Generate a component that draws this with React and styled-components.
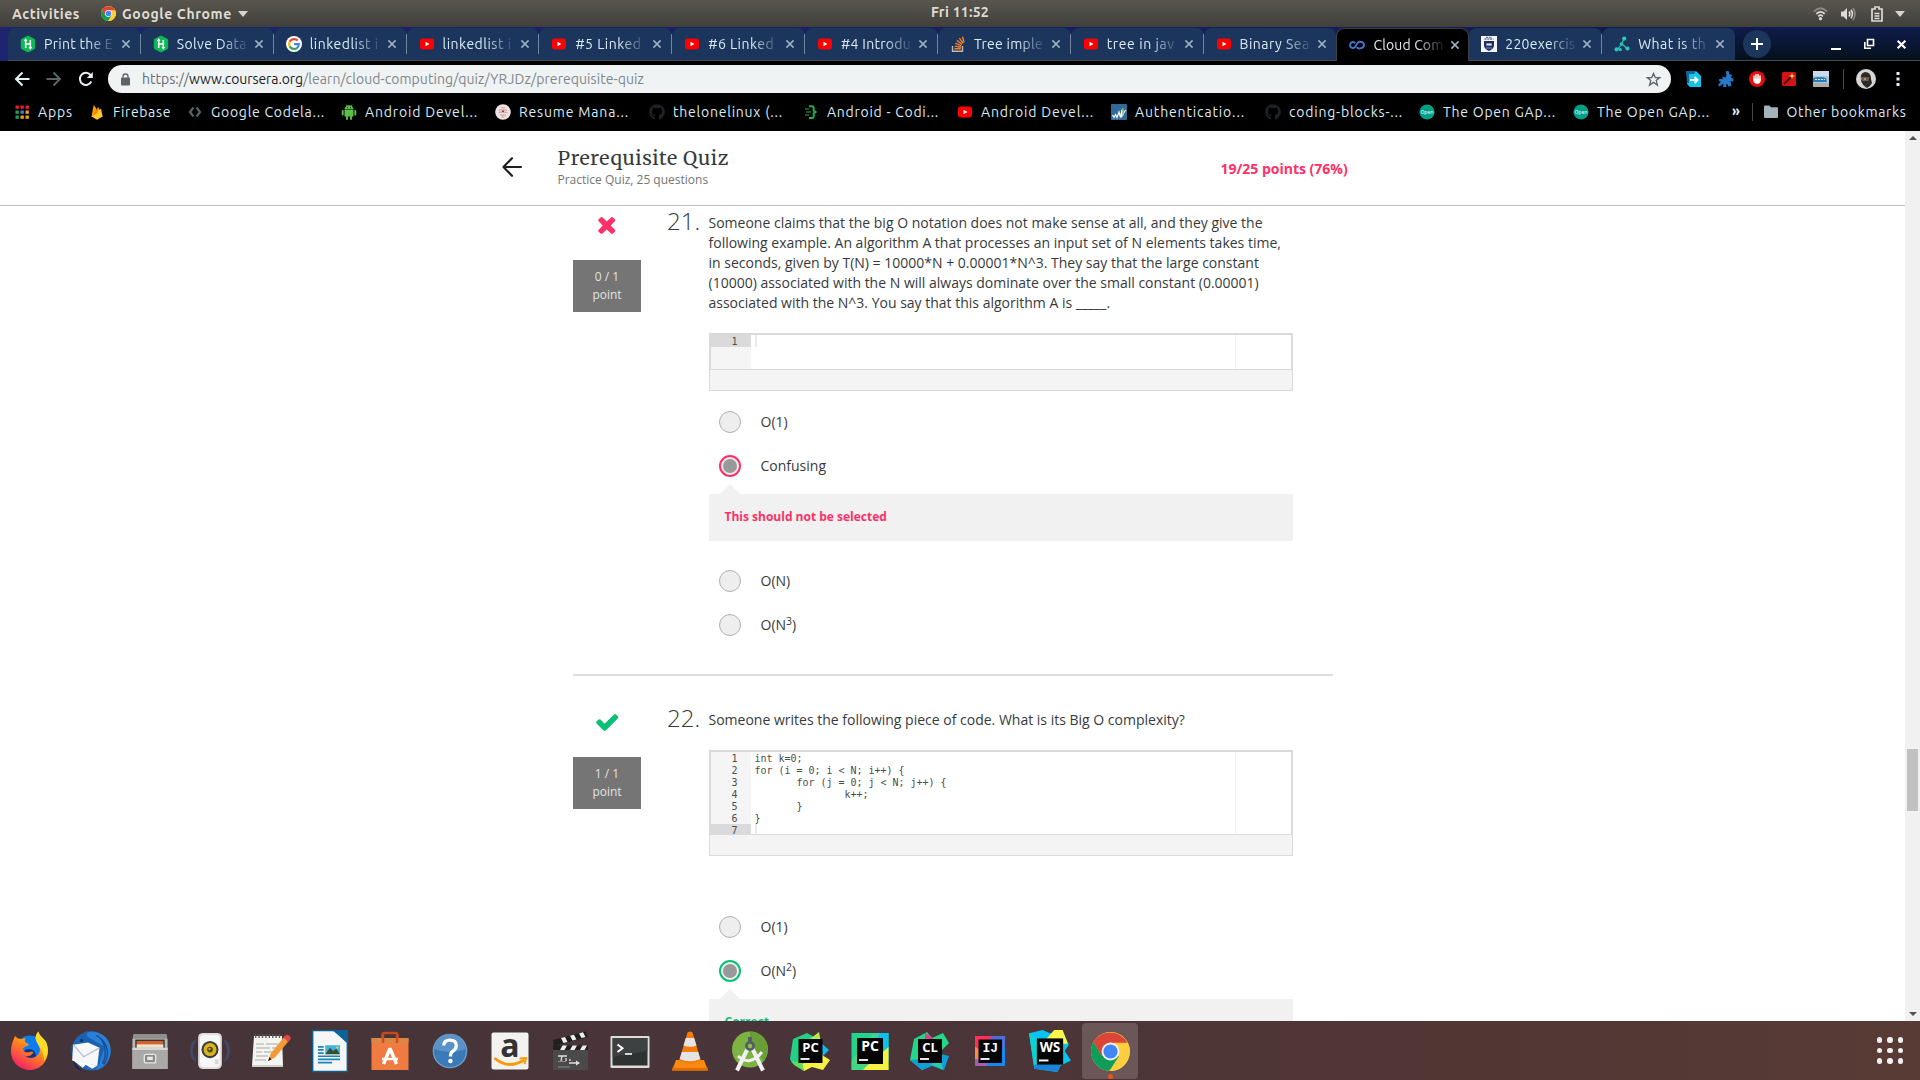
import React, { useLayoutEffect, useRef } from "react";
import styled, { createGlobalStyle } from "styled-components";
import { FaGithub } from "react-icons/fa";

const Global = createGlobalStyle`
  * { box-sizing: border-box; }
  html, body { margin: 0; padding: 0; }
  body { width: 1920px; height: 1080px; overflow: hidden; background: #fff; }
  svg { display: block; flex: none; overflow: visible; }
`;

const UI = `"Ubuntu", "Noto Sans", "Open Sans", sans-serif`;
const BODY = `"Open Sans", "Noto Sans", sans-serif`;

/* ---------- fitted text ---------- */
const Run = styled.span`
  display: inline-block;
  white-space: pre;
  color: ${(p) => p.$color || "inherit"};
`;
function Fitted({ w, color, children }) {
  const ref = useRef(null);
  useLayoutEffect(() => {
    const el = ref.current;
    el.style.letterSpacing = "0px";
    const natural = el.getBoundingClientRect().width;
    el.style.letterSpacing = (w - natural) / el.textContent.length + "px";
  }, [w, children]);
  return <Run ref={ref} $color={color}>{children}</Run>;
}

/* ---------- desktop ---------- */
const Desktop = styled.div`
  display: flex;
  flex-direction: column;
  width: 1920px;
  height: 1080px;
  overflow: hidden;
  font-family: ${UI};
`;
const TopBar = styled.div`
  display: grid;
  grid-template-columns: 1fr auto 1fr;
  align-items: center;
  flex: none;
  height: 27px;
  padding: 0 12px 0 12px;
  background: linear-gradient(#59564f, #403f3a);
  color: #dfdbd2;
  font-size: 14px;
  font-weight: 600;
  line-height: 26px;
`;
const TopLeft = styled.div`
  display: flex;
  align-items: center;
`;
const AppMenu = styled.div`
  display: flex;
  align-items: center;
  gap: 6px;
  margin-left: 21px;
`;
const Clock = styled.div`
  height: 26px;
  margin-top: -1px;
  line-height: 25px;
`;
const TopRight = styled.div`
  display: flex;
  align-items: center;
  justify-content: flex-end;
`;
const StatusSlot = styled.div`
  display: flex;
  justify-content: center;
  width: ${(p) => p.$w}px;
`;

/* ---------- tabs ---------- */
const TabStrip = styled.div`
  display: flex;
  flex: none;
  height: 34px;
  padding: 1px 0 0 8px;
  background: linear-gradient(90deg, rgba(30,36,112,1), rgba(27,30,96,.9) 60%, rgba(14,26,66,0) 88%), linear-gradient(#101c4c, #04101a);
`;
const TabBox = styled.div`
  display: flex;
  align-items: center;
  position: relative;
  width: 132.85px;
  height: 33px;
  padding-left: 12px;
  border-radius: 8px 8px 0 0;
  background: ${(p) => (p.$active ? "#000" : "#1b355d")};
  border: ${(p) => (p.$active ? "1px solid #3c4045" : "0")};
  border-bottom: ${(p) => (p.$active ? "0" : "1px solid #46484a")};
  color: #dcebf3;
  font-size: 14px;
`;
const TabSep = styled.i`
  width: 1px;
  height: 20px;
  margin-left: auto;
  background: ${(p) => (p.$hide ? "transparent" : "#71869c")};
`;
const TabTitle = styled.div`
  width: 70px;
  margin-left: 8px;
  overflow: hidden;
  white-space: nowrap;
  line-height: 22px;
  mask-image: linear-gradient(90deg, #000 62%, rgba(0,0,0,.15) 98%);
`;
const TabClose = styled.div`
  margin-left: 5px;
`;
const StripTail = styled.div`
  display: flex;
  flex: 1;
  align-items: center;
  padding: 0 11px 0 8px;
  border-bottom: 1px solid #46484a;
`;
const NewTab = styled.div`
  display: grid;
  place-items: center;
  width: 28px;
  height: 28px;
  border-radius: 50%;
  background: #1b355d;
`;
const WindowButtons = styled.div`
  display: flex;
  align-items: center;
  gap: 18.5px;
  margin-left: auto;
`;

/* ---------- toolbar ---------- */
const Toolbar = styled.div`
  display: flex;
  align-items: center;
  flex: none;
  height: 36px;
  padding: 0 13px 0 14px;
  background: #000;
`;
const NavButtons = styled.div`
  display: flex;
  gap: 16px;
  width: 94px;
`;
const UrlBar = styled.div`
  display: flex;
  align-items: center;
  width: 1563px;
  height: 28px;
  padding: 0 10px 0 13px;
  border-radius: 14px;
  background: #eff3f4;
  color: #80868b;
  font-size: 14px;
`;
const UrlText = styled.div`
  display: flex;
  flex: 1;
  margin-left: 12px;
  line-height: 26px;
`;
const Extensions = styled.div`
  display: flex;
  align-items: center;
  gap: 15.7px;
  margin-left: 15px;
`;
const Profile = styled.div`
  display: flex;
  align-items: center;
  justify-content: space-between;
  flex: 1;
  height: 20px;
  margin-left: 14px;
  padding: 0 7px 0 12px;
  border-left: 1px solid #45494c;
`;

/* ---------- bookmarks ---------- */
const Bookmarks = styled.div`
  display: flex;
  align-items: center;
  flex: none;
  height: 34px;
  padding: 0 0 4px 14px;
  background: #000;
  color: #dcebf3;
  font-size: 14px;
`;
const Bookmark = styled.div`
  display: flex;
  align-items: center;
  gap: 8px;
  flex: none;
  width: ${(p) => p.$w}px;
  line-height: 24px;
`;
const More = styled.div`
  display: flex;
  align-items: center;
  flex: none;
  width: 21px;
  height: 18px;
  border-right: 1px solid #45494c;
  margin: 0 9.5px 0 2px;
  padding-bottom: 3px;
  font-weight: 700;
`;

/* ---------- page ---------- */
const Viewport = styled.div`
  display: flex;
  height: 890px;
  flex: none;
  overflow: hidden;
`;
const Page = styled.div`
  display: flex;
  flex-direction: column;
  flex: 1;
  font-family: ${BODY};
  color: #373a3c;
  background: #fff;
`;
const PageHeader = styled.div`
  display: flex;
  align-items: flex-start;
  flex: none;
  height: 75px;
  padding: 14px 0 0 501.5px;
  border-bottom: 1px solid #bdbdbd;
`;
const BackArrow = styled.div`
  width: 56px;
  padding-top: 12px;
`;
const TitleBlock = styled.div`
  width: 663px;
`;
const Title = styled.div`
  font-family: "Merriweather", "DejaVu Serif Condensed", "DejaVu Serif", serif;
  font-stretch: condensed;
  font-size: 19.5px;
  line-height: 26px;
  color: #373a3c;
`;
const Subtitle = styled.div`
  font-size: 12px;
  line-height: 18px;
  color: #757575;
`;
const Score = styled.div`
  padding-top: 14px;
  font-size: 14px;
  line-height: 20px;
  font-weight: 700;
  color: #ff3067;
`;
const Questions = styled.div`
  display: flex;
  flex-direction: column;
  width: 760px;
  margin-left: 573px;
  padding-top: 7px;
`;
const Question = styled.div`
  display: flex;
  align-items: flex-start;
`;
const Divider = styled.div`
  height: 2px;
  margin: 38px 0 34px;
  background: #dfdfdf;
`;
const Status = styled.div`
  display: flex;
  flex-direction: column;
  align-items: center;
  width: 68px;
  padding-top: 4px;
  gap: 26px;
`;
const Points = styled.div`
  width: 68px;
  height: 52px;
  padding-top: 8px;
  background: #757575;
  color: #e2e2e2;
  font-size: 12px;
  line-height: 18px;
  text-align: center;
`;
const Number = styled.div`
  width: 67.5px;
  margin-top: -4px;
  padding-left: 26px;
  font-size: 24px;
  font-weight: 300;
  line-height: 24px;
`;
const Content = styled.div`
  width: 585px;
`;
const Prompt = styled.div`
  font-size: 14px;
  line-height: 20px;
  white-space: nowrap;
`;
const Editor = styled.div`
  width: 584px;
  margin: 20px 0 ${(p) => p.$after}px 0.5px;
  border: 1px solid #dadada;
  background: #f4f4f4;
  font-family: "DejaVu Sans Mono", "Liberation Mono", monospace;
  font-size: 10px;
  line-height: 14px;
`;
const EditorPane = styled.div`
  display: flex;
  height: ${(p) => p.$h}px;
  overflow: hidden;
  border: 1px solid #dadada;
  background: #fff;
`;
const EditorFoot = styled.div`
  height: 20px;
`;
const Gutter = styled.div`
  width: 40px;
  background: #f5f5f5;
  color: #4d4d4c;
`;
const LineNo = styled.div`
  height: 12px;
  padding-right: 13.5px;
  text-align: right;
  background: ${(p) => (p.$current ? "#dadada" : "transparent")};
`;
const Code = styled.div`
  width: 485px;
  padding-left: 3.5px;
  border-right: 1px solid #f0f0f0;
  color: #4d4d4c;
  white-space: pre;
  letter-spacing: -0.02px;
`;
const CodeLine = styled.div`
  height: 12px;
`;
const Caret = styled.div`
  width: 2px;
  height: 12px;
  background: #ebebeb;
`;
const Choice = styled.div`
  display: flex;
  align-items: center;
  height: 22px;
  margin: 0 0 ${(p) => p.$after}px 10.5px;
  gap: 19.5px;
  font-size: 14px;
  line-height: 20px;
  sup { font-size: 10.5px; line-height: 0; position: relative; vertical-align: baseline; top: -5px; }
`;
const Radio = styled.div`
  display: grid;
  place-items: center;
  width: 22px;
  height: 22px;
  border-radius: 50%;
  background: #eee;
  border: ${(p) => (p.$ring ? `2px solid ${p.$ring}` : "1px solid #b0b0b0")};
  &::after {
    content: "";
    width: 14px;
    height: 14px;
    border-radius: 50%;
    background: ${(p) => (p.$ring ? "#999" : "transparent")};
  }
`;
const Feedback = styled.div`
  position: relative;
  width: 584px;
  height: 47px;
  margin: 0 0 29px 0.5px;
  padding: 14px 0 0 15.5px;
  background: #f1f1f1;
  color: ${(p) => p.$color};
  font-size: 12px;
  font-weight: 700;
  line-height: 18px;
  &::before {
    content: "";
    position: absolute;
    left: 11px;
    top: -10px;
    border: 10px solid transparent;
    border-top: 0;
    border-bottom-color: #f1f1f1;
  }
`;
const Scrollbar = styled.div`
  display: flex;
  flex-direction: column;
  align-items: center;
  width: 15px;
  padding: 5px 0;
  background: #f1f1f1;
`;
const Thumb = styled.div`
  width: 11px;
  height: 62px;
  margin: 609px 0 auto;
  background: #c1c1c1;
`;
const Arrow = styled.div`
  border: 4px solid transparent;
  border-${(p) => (p.$down ? "top" : "bottom")}-color: #505050;
  border-${(p) => (p.$down ? "bottom" : "top")}-width: 0;
`;

/* ---------- dock ---------- */
const Dock = styled.div`
  display: flex;
  flex: none;
  align-items: center;
  height: 59px;
  padding-right: 17px;
  background: linear-gradient(90deg, #443439, #4a3439 45%, #513634 75%, #583b35);
`;
const DockItem = styled.div`
  display: flex;
  justify-content: center;
  align-items: center;
  position: relative;
  width: ${(p) => (p.$active ? 56 : 60)}px;
  height: 56px;
  margin-top: 1px;
  margin-left: ${(p) => (p.$active ? 2 : 0)}px;
  border-radius: 4px;
  background: ${(p) => (p.$active ? "rgba(255,255,255,.17)" : "transparent")};
`;
const RunningDot = styled.i`
  position: absolute;
  bottom: 0;
  left: 26px;
  width: 5px;
  height: 5px;
  border-radius: 50%;
  background: #e95420;
`;
const AppsGrid = styled.div`
  display: grid;
  grid-template-columns: repeat(3, 5.4px);
  gap: 5.1px;
  margin-left: auto;
  i { width: 5.4px; height: 5.4px; border-radius: 50%; background: #f3f1ef; }
`;

/* ---------- icons ---------- */
const S = ({ s = 16, h, v = "0 0 16 16", children }) => (
  <svg width={s} height={h || s} viewBox={v} fill="none">{children}</svg>
);
const ChromeIcon = ({ s }) => (
  <S s={s} v="0 0 40 40">
    <circle cx="20" cy="20" r="20" fill="#ffcd40" />
    <path d="M2.7 10A20 20 0 0 0 19 40L28.5 25L20 20L11 24Z" fill="#0f9d58" />
    <path d="M37.3 10.5A20 20 0 0 1 19 40L28.8 25L26 12Z" fill="#ffcd40" />
    <path d="M2.7 10L11.3 25L20 11H37.3A20 20 0 0 0 2.7 10Z" fill="#db4437" />
    <circle cx="20" cy="20" r="9.2" fill="#f1f1f1" />
    <circle cx="20" cy="20" r="7.3" fill="#4285f4" />
  </S>
);
const HackerRank = () => (
  <S><path d="M8 0L14.7 3.5V12.5L8 16L1.3 12.5V3.5Z" fill="#0fb955" stroke="#0fb955" strokeLinejoin="round" />
    <path d="M5.7 4V12M10.3 4V12M5.7 8H10.3M4.6 5L5.7 3.6L6.8 5M9.2 11L10.3 12.4L11.4 11" stroke="#fff" strokeWidth="1.6" /></S>
);
const GoogleIcon = () => (
  <S><circle cx="8" cy="8" r="8" fill="#fff" />
    <path d="M11.6 4.6A5 5 0 0 0 3.7 5.6" stroke="#ea4335" strokeWidth="2.2" />
    <path d="M3.7 5.5A5 5 0 0 0 3.7 10.5" stroke="#fbbc05" strokeWidth="2.2" />
    <path d="M3.7 10.4A5 5 0 0 0 11.2 11.8" stroke="#34a853" strokeWidth="2.2" />
    <path d="M8 8.1H12.9A5 5 0 0 1 11 12" stroke="#4285f4" strokeWidth="2.1" /></S>
);
const YouTube = () => (
  <S><rect x="1" y="2.6" width="14" height="10.8" rx="2.4" fill="#f00" /><path d="M6.5 5.7L10.4 8L6.5 10.3Z" fill="#fff" /></S>
);
const StackOverflow = () => (
  <S><path d="M2.5 10V15.2H12.5V10" stroke="#bcbbbb" strokeWidth="1.4" />
    <path d="M4.5 12.8H10.8M4.6 10.1L10.9 11.2M5.3 7.2L11.2 9.9M7 4.4L12 8.4M9.4 2.1L13 7.2M12.5.7L14 6.5" stroke="#f48024" strokeWidth="1.4" /></S>
);
const CourseraIcon = () => (
  <S><path d="M12.2 5.2C9 3.4 7.4 8 6.4 9.6C4.7 12 1 11 1 8C1 5 4.6 4.2 6.2 6.2M7.6 10.4C10 12.6 15 11 15 8C15 6.3 13.5 4.8 11.6 4.8" stroke="#4576c9" strokeWidth="1.9" /></S>
);
const CrestIcon = () => (
  <S><rect width="16" height="16" fill="#f5f6fa" />
    <path d="M3 5H13V9C13 12.5 10 14 8 15C6 14 3 12.5 3 9Z" fill="#1d2b63" /><path d="M5 1.3H11M3.5 3H12.5" stroke="#6d7690" strokeWidth="1.3" strokeDasharray="2 .8" />
    <path d="M5.3 7.4H10.7V9.6H5.3Z" fill="#dfe5f4" /><path d="M5 12L11 12" stroke="#7e8bb8" /></S>
);
const TreeIcon = () => (
  <S><path d="M10 3L7.5 8L4 13M8 8L12.8 12.3" stroke="#28c7b5" strokeWidth="1.2" />
    <circle cx="10.2" cy="2.6" r="2.1" fill="#28d0bb" /><circle cx="7.5" cy="8" r="1.8" fill="#28c7b5" />
    <circle cx="2.6" cy="13.4" r="2.1" fill="#28c7b5" /><circle cx="6.3" cy="13.6" r="1.6" fill="#28c7b5" /><circle cx="13.5" cy="12.5" r="2.1" fill="#28c7b5" /></S>
);
const CloseIcon = ({ s = 14, c = "#9db3c3", w = 1.5 }) => (
  <S s={s} v="0 0 14 14"><path d="M3.4 3.4L10.6 10.6M10.6 3.4L3.4 10.6" stroke={c} strokeWidth={w} /></S>
);
const Caret6 = () => <S s={10} h={6} v="0 0 10 6"><path d="M0 0H10L5 6Z" fill="#d8d4cb" /></S>;

const AppsIcon = () => (
  <S>{[0, 1, 2].map((r) => [0, 1, 2].map((c) => (
    <rect key={r + "-" + c} x={1.5 + c * 5} y={1.5 + r * 5} width="3.3" height="3.3"
      fill={[["#ea1d2c", "#ea1d2c", "#ea1d2c"], ["#22a35a", "#3f7df0", "#f5a312"], ["#22a35a", "#f5a312", "#f5a312"]][r][c]} />
  )))}</S>
);
const FirebaseIcon = () => (
  <S><path d="M2.5 12.5L4.8 .8L8 6L9.3 3L13.5 12.5Z" fill="#ffa000" /><path d="M2.5 12.6L12 4.5L13.6 12.6L8 15.8Z" fill="#ffca28" /><path d="M2.5 12.6L9.3 3L8 9Z" fill="#f57c00" /></S>
);
const CodelabIcon = () => <S><path d="M6.4 3.5L3 8L6.4 12.5M9.6 3.5L13 8L9.6 12.5" stroke="#4f6470" strokeWidth="2.2" /></S>;
const AndroidIcon = ({ c = "#5bbf4a" }) => (
  <S><path d="M3.5 5.4A4.5 4.2 0 0 1 12.5 5.4ZM3.5 6.1H12.5V12.6H3.5Z" fill={c} />
    <path d="M1.7 6.9V10.5M14.3 6.9V10.5M6 12V15M10 12V15" stroke={c} strokeWidth="1.9" strokeLinecap="round" />
    <path d="M5 .6L6.2 2.4M11 .6L9.8 2.4" stroke={c} strokeWidth=".8" /><path d="M6 3.8H6.8M9.2 3.8H10" stroke="#000" /></S>
);
const ResumeIcon = () => (
  <S><circle cx="8" cy="8" r="7.8" fill="#f0e3e3" /><path d="M4 6H12M3.5 8.2H12.5M5 11H11M6 3.8H10M6.5 13H9.5" stroke="#c99396" /><path d="M7 6.4H9V8H7Z" fill="#9b3c42" /></S>
);
const CodingIcon = () => <S><path d="M6 2.3H9Q10.700 2.300 10.700 4.500V6.500L12.500 8L10.700 9.500V12Q10.700 14 9 14H6" stroke="#22b04b" strokeWidth="2" /><path d="M2 5H6M3 8H8M2 11H6" stroke="#22b04b" strokeWidth="1.200" /></S>;
const AuthIcon = () => <S><rect width="16" height="16" rx="1" fill="#316a98" /><path d="M1.500 11L3 13.5L4.500 10.500L6 13.5L8 8L9.500 13.5L11 5.500V12L14.5 6" stroke="#fff" strokeWidth="1.2" /><path d="M12 4V12" stroke="#91c654" strokeWidth="1.2" /></S>;
const OpenIcon = () => (
  <S><circle cx="8" cy="8" r="7.6" fill="#009e86" /><text x="8" y="9.8" fontSize="5" textAnchor="middle" fill="#d6f2ec" fontFamily="Open Sans" fontWeight="600">Open</text></S>
);
const GithubDim = () => <FaGithub size={16} color="#1e2224" />;
const FolderIcon = () => <S><path d="M1 2.5Q1 1.5 2 1.5H6.3L8 3.2H14Q15 3.2 15 4.2V13Q15 14 14 14H2Q1 14 1 13Z" fill="#a3b3bb" /></S>;

/* dock drawings, on a 40 × 40 grid */
const D = ({ children, s = 40 }) => <S s={s} v="0 0 40 40">{children}</S>;
const Firefox = () => (
  <D><defs><linearGradient id="ff" x1="0.8" y1="0" x2="0.2" y2="1"><stop stopColor="#ffe033" /><stop offset=".45" stopColor="#ff8a1c" /><stop offset="1" stopColor="#f5156c" /></linearGradient></defs>
    <circle cx="20" cy="19" r="14.5" fill="#0a7cf0" /><circle cx="19" cy="25" r="7" fill="#16307c" />
    <path d="M5 5C7 7 8.5 8 11.5 8L15.5 7C14 10 15 12 19 13C18 16 14 15 13 17.5C13 21 17 22 20 21C22 20.5 23 21 23.5 21.5C21 24 20 26 15 25C20 29 29 27 30 19C30 15 27 12 26 9C25 5 27 2 28.5 .5C29 5 33 6 36 11C42 24 34 38 21 39C9 39 .5 31 1 19C1 14 3 10 5 5Z" fill="url(#ff)" />
    <path d="M26 9C25 5 27 2 28.5 .5C29 5 33 6 36 11C39 18 38 25 34 30C35 22 29 17 26 9Z" fill="#ffe226" opacity=".85" /></D>
);
const Thunderbird = () => (
  <D s={42}><circle cx="21" cy="20" r="18.5" fill="#1d68bd" /><path d="M8 12C11 4 18 0 26 2C36 5 41 13 39.5 23C38 32 31 38 25 38C34 30 30 15 19 12Z" fill="#2a7fd6" />
    <path d="M2 16L9 10C10 5 15 1 19 1C15 4 17 7 22 9L34 16L28 34L9 31Z" fill="#1862b0" />
    <path d="M30 8C35 14 36 24 32 32M26 5C38 12 39 24 33 33" stroke="#134f96" strokeWidth="1.3" />
    <path d="M4 14L18 12L29 17L27 34L3 29Z" fill="#f6f7fa" /><path d="M4 14L14 25.5L29 17" stroke="#b7bfca" strokeWidth="1.2" />
    <path d="M4 30L12 39C8 38 5 35 4 30Z" fill="#241b5e" /><path d="M3 28L27 34L22 37L16 33L13 36Z" fill="#fff" /><circle cx="12" cy="10" r="1.4" fill="#0c2c5d" /></D>
);
const Files = () => (
  <D s={38}><path d="M3 2H37L38.5 8V39H1.5V8Z" fill="#b9b9b7" /><path d="M3 2H37L38 7H2Z" fill="#8f8f8d" /><rect x="4.500" y="8" width="31" height="9" fill="#3a3532" />
    <path d="M6 9.5H34V17H6Z" fill="#d3622a" /><path d="M6 13H34V17H6Z" fill="#f0e1cf" /><path d="M1.5 16.5H38.5V39H1.5Z" fill="#a9a9a7" /><path d="M1.5 16.5H38.5V19H1.5Z" fill="#d7d7d5" />
    <rect x="14" y="23.500" width="12" height="9" rx="2" fill="#8a8a88" stroke="#e8e8e6" strokeWidth="1.400" /><rect x="17" y="26" width="6" height="3.500" fill="#e8e8e6" /></D>
);
const Speaker = () => (
  <D s={38}><path d="M5 8Q-3 20 5 31M35 8Q43 20 35 31M2.5 10Q-3 20 2.5 29M37.5 10Q43 20 37.5 29" stroke="#43496a" strokeWidth="1.600" /><rect x="7.500" y="1" width="25" height="38" rx="5" fill="#dedddb" /><rect x="9.500" y="3" width="21" height="34" rx="4" fill="#f7f7f7" />
    <circle cx="20" cy="18.500" r="9" fill="#3d3d3d" /><circle cx="20" cy="18.500" r="6.800" fill="#d8b51e" /><circle cx="20" cy="18.500" r="3" fill="#52480f" /><circle cx="19.500" cy="18" r="1.300" fill="#c7a81e" /><path d="M25 29H29V34H25Z" fill="#d8d7d5" /></D>
);
const Notes = () => (
  <D><path d="M4 5H32L33 35H2Z" fill="#f4f4f1" /><path d="M2 34H33V36H2Z" fill="#cfcfca" /><path d="M5 5H31" stroke="#5b5b5b" strokeWidth="4" strokeDasharray="1.400 2" />
    <path d="M6 13H14M16 13H28M6 17H20M22 17H26M6 21H12M14 21H22M6 25H18M5 29H16" stroke="#c1c1bd" strokeWidth="1.300" />
    <path d="M18 30L21 22L35 5L39.5 9L25 26.5Z" fill="#f39a36" /><path d="M33.5 6.5L36.5 3.5Q40 4 41 7.5L38 11Z" fill="#e0474c" /><path d="M18 30L19.5 26L21.5 28.5Z" fill="#222" /></D>
);
const Writer = () => (
  <D s={42}><path d="M3.5 0.5H25L36.5 12V39.5H3.5Z" fill="#f6f6f6" stroke="#0d5f8d" strokeWidth="1.400" /><path d="M22 0H37V12.5Z" fill="#0a649b" />
    <path d="M8.5 16H14M8.5 19H14M8.5 22H14M8.5 25H29.5M8.5 28H29.5M8.5 31H22" stroke="#1d85b8" strokeWidth="1.600" /><rect x="15.500" y="14.500" width="14" height="8.500" fill="#43b4dc" /><path d="M15.5 23L20 17L23 20L26 17.5L29.5 23Z" fill="#35502c" /><circle cx="27" cy="16.800" r="1" fill="#f4df3a" /></D>
);
const Software = () => (
  <D><path d="M12.5 10V4Q12.5 2 15 2H25Q27.5 2 27.5 4V10" stroke="#c04a1d" strokeWidth="2.600" /><path d="M1.5 7H38.5V39H1.5Z" fill="#f07b40" /><path d="M1.5 7H38.5V12H1.5Z" fill="#d98745" /><path d="M13 4V12M27 4V12" stroke="#cd4c20" strokeWidth="2.500" />
    <path d="M13.5 33L20 17.5L26.5 33" stroke="#fff" strokeWidth="3.400" strokeLinejoin="bevel" /><path d="M12 28H28" stroke="#fff" strokeWidth="2.400" /></D>
);
const Help = () => (
  <D s={36}><circle cx="20" cy="20" r="18.500" fill="#3a7ab8" stroke="#6d9fcd" strokeWidth="1.500" /><path d="M3 18A17 17 0 0 1 37 18Q20 24 3 18Z" fill="#5b93c9" />
    <path d="M13 14Q13 8 20 8Q27 8 27 14Q27 18 23 20.5Q20.5 22 20.5 26" stroke="#fff" strokeWidth="3.600" /><circle cx="20.500" cy="31" r="2.500" fill="#fff" /></D>
);
const Amazon = () => (
  <D><rect x="1.500" y="1.500" width="37" height="37" rx="2" fill="#f2f2f1" /><text x="20" y="26" textAnchor="middle" fontSize="32" fontWeight="700" fontFamily="Open Sans" fill="#333">a</text>
    <path d="M4.5 27Q18 39 34 29" stroke="#ff9900" strokeWidth="2.800" /><path d="M29.5 27.5L36 27L34.5 33" stroke="#ff9900" strokeWidth="2" /></D>
);
const Clapper = () => (
  <D><path d="M3 19H38V39H3Z" fill="#4a4a4a" /><path d="M3 14.5H38V19H3Z" fill="#202020" /><path d="M3 9L36 .5L37.5 6L4 15Z" fill="#202020" />
    <path d="M10 19L12.5 14.5H17L14.5 19ZM20 19L22.5 14.5H27L24.5 19ZM30 19L32.5 14.5H37L34.500 19ZM11 7L15 6L17.5 11L13.5 12ZM20 4.800L24 3.700L26.5 8.5L22.5 9.5ZM29 2.400L33 1.300L35.5 6L31.5 7Z" fill="#eee" />
    <path d="M8 25H17M12 25L11 30M16 27V30M20 28V30M19 32H29" stroke="#ddd" strokeWidth="1.300" /><path d="M26 29.5L30 32L26 34.5Z" fill="#ddd" /><path d="M8 30.500H16M8 36H20" stroke="#8a8a8a" /></D>
);
const Terminal = () => (
  <D><rect x=".5" y="5" width="39" height="32" rx="1" fill="#dcdcda" /><rect x="2.500" y="7" width="35" height="27.500" fill="#2f3232" /><path d="M2.5 7H37.5V20L2.5 26Z" fill="#444747" opacity=".7" />
    <path d="M7.500 13.5L12.5 17.2L7.5 21" stroke="#fff" strokeWidth="2" /><path d="M15 23H22" stroke="#fff" strokeWidth="1.600" /></D>
);
const Vlc = () => (
  <D><path d="M6 29H34L38 39.5H2Z" fill="#f88b0d" /><path d="M2 37H38V39.5H2Z" fill="#e06c00" /><path d="M17.5 1.5Q20 -.5 22.5 1.5L31 30Q20 35 9 30Z" fill="#f37c0c" /><path d="M15.8 7H24.2L26.5 14.5Q20 17 13.5 14.5ZM11.8 21H28.2L30.3 28Q20 32.5 9.7 28Z" fill="#e4e4e4" /></D>
);
const AndroidStudio = () => (
  <D><circle cx="20" cy="18.500" r="18" fill="#7cb342" /><path d="M20 .5A18 18 0 0 1 38 18.5L34 30L20 12Z" fill="#689f38" />
    <path d="M18 17L7 39.5M22 17L33 39.5" stroke="#f1f1f1" strokeWidth="4" /><path d="M8 25Q20 36 32 21" stroke="#f1f1f1" strokeWidth="3" /><circle cx="20" cy="15" r="5" fill="#566066" /><circle cx="20" cy="15" r="2.200" fill="#8ac34a" /><path d="M18 6H22V11H18Z" fill="#566066" /></D>
);
const Badge = ({ t, x = 8.5, y = 8, s = 24, fs = 13 }) => (
  <><rect x={x} y={y} width={s} height={s} fill="#050505" /><text x={x + s / 2} y={y + 12.5} textAnchor="middle" fontSize={fs} fontWeight="700" fontFamily={t === "IJ" ? "Liberation Mono" : "Open Sans"} fill="#fff">{t}</text><path d={`M${x + 2} ${y + s - 4}H${x + 11}`} stroke="#fff" strokeWidth="1.800" /></>
);
const PyCharm = () => (
  <D><path d="M3 8L17 2L28 8L30 22L14 40L2 32L0 28Z" fill="#22d088" /><path d="M20 8L29 1L31 12Z" fill="#b8e84c" /><path d="M30 11L39 19L30 28Z" fill="#12b8f0" /><path d="M12 33L32 24L40 29L33 39L22 36L14 40Z" fill="#f6f142" /><path d="M2 30L12 32L14 40L4 34Z" fill="#5ede5b" /><Badge t="PC" /></D>
);
const PyCharmEdu = () => (
  <D><path d="M1.5 2H38.5V39H1.5Z" fill="#22d58e" /><path d="M24 2H38.5V28L28 34Z" fill="#0fc0e8" /><path d="M38.5 16V39H12Z" fill="#f6f142" /><path d="M1.5 30L24 2H30L14 39H1.5Z" fill="#58d97b" opacity=".6" /><Badge t="PC" x={7} y={7} s={26} fs={14} /></D>
);
const CLion = () => (
  <D><path d="M4 8L17 1L22 7L33 2L39 12L31 20V30L12 39L0 29Z" fill="#21d789" /><path d="M15 2L22 6L23 10H15Z" fill="#e83e8c" /><path d="M0 29L14 28L28 28L31 23L39 25L34 39L22 35L12 39Z" fill="#0e9fd8" /><path d="M20 33L31 30L33 39Z" fill="#22cfae" /><Badge t="CL" x={8} y={8} /></D>
);
const IntelliJ = () => (
  <D><path d="M5 5H35V35H5Z" fill="#4a6fd8" /><path d="M5 5H23L5 20Z" fill="#fe315d" /><path d="M5 16L12 20V30L5 35Z" fill="#f58c4c" /><path d="M5 28H14L20 35H5Z" fill="#a05fb0" /><path d="M35 16V35H16Z" fill="#1389f2" /><Badge t="IJ" x={8.5} y={8.5} s={23.5} /></D>
);
const WebStorm = () => (
  <D s={42}><path d="M0 3L13 0L20 3L32 1L38 14L34 20L40 29L30 34L27 40L5 37Z" fill="#07c3f2" /><path d="M24 0H32L37 13H30L16 9Z" fill="#fcf84a" /><path d="M0 3L8 8V36H5Z" fill="#0bd1d0" /><path d="M5 33H30L27 40L5 37Z" fill="#1c84d8" /><Badge t="WS" x={7.5} y={8} s={25} /></D>
);

/* ---------- data ---------- */
const TABS = [
  [HackerRank, "Print the E", 69], [HackerRank, "Solve Data", 70], [GoogleIcon, "linkedlist i", 69], [YouTube, "linkedlist i", 69],
  [YouTube, "#5 Linked", 66], [YouTube, "#6 Linked", 66], [YouTube, "#4 Introdu", 70], [StackOverflow, "Tree imple", 69],
  [YouTube, "tree in jav", 68], [YouTube, "Binary Sea", 70], [CourseraIcon, "Cloud Com", 70], [CrestIcon, "220exercis", 70], [TreeIcon, "What is th", 68],
];
const MARKS = [
  [AppsIcon, "Apps", 35, 75], [FirebaseIcon, "Firebase", 58, 98], [CodelabIcon, "Google Codela...", 114, 154], [AndroidIcon, "Android Devel...", 113, 154],
  [ResumeIcon, "Resume Mana...", 110, 154], [GithubDim, "thelonelinux (...", 110, 154], [CodingIcon, "Android - Codi...", 112, 154], [YouTube, "Android Devel...", 113, 154],
  [AuthIcon, "Authenticatio...", 110, 154], [GithubDim, "coding-blocks-...", 114, 154], [OpenIcon, "The Open GAp...", 113, 154], [OpenIcon, "The Open GAp...", 113, 157],
];
const DOCK = [Firefox, Thunderbird, Files, Speaker, Notes, Writer, Software, Help, Amazon, Clapper, Terminal, Vlc, AndroidStudio, PyCharm, PyCharmEdu, CLion, IntelliJ, WebStorm];
const PROMPT = [
  "Someone claims that the big O notation does not make sense at all, and they give the",
  "following example. An algorithm A that processes an input set of N elements takes time,",
  "in seconds, given by T(N) = 10000*N + 0.00001*N^3. They say that the large constant",
  "(10000) associated with the N will always dominate over the small constant (0.00001)",
  "associated with the N^3. You say that this algorithm A is _____.",
];
const CODE = ["int k=0;", "for (i = 0; i < N; i++) {", "       for (j = 0; j < N; j++) {", "               k++;", "       }", "}", ""];

function CodeBox({ lines, height, after }) {
  return (
    <Editor $after={after}>
      <EditorPane $h={height}>
        <Gutter>{lines.map((_, i) => <LineNo key={i} $current={i === lines.length - 1}>{i + 1}</LineNo>)}</Gutter>
        <Code>{lines.map((l, i) => (i === lines.length - 1 ? <Caret key={i} /> : <CodeLine key={i}>{l}</CodeLine>))}</Code>
      </EditorPane>
      <EditorFoot />
    </Editor>
  );
}
const Mark = ({ ok }) =>
  ok ? (
    <svg width="22.5" height="17" viewBox="121 334 1550 1188"><path fill="#08c177" d="M1671 566q0 40-28 68l-724 724-136 136q-28 28-68 28t-68-28l-136-136-362-362q-28-28-28-68t28-68l136-136q28-28 68-28t68 28l294 295 656-657q28-28 68-28t68 28l136 136q28 28 28 68z" /></svg>
  ) : (
    <svg width="17.5" height="17" viewBox="302 366 1188 1188"><path fill="#ff3067" d="M1490 1322q0 40-28 68l-136 136q-28 28-68 28t-68-28l-294-294-294 294q-28 28-68 28t-68-28l-136-136q-28-28-28-68t28-68l294-294-294-294q-28-28-28-68t28-68l136-136q28-28 68-28t68 28l294 294 294-294q28-28 68-28t68 28l136 136q28 28 28 68t-28 68l-294 294 294 294q28 28 28 68z" /></svg>
  );

export default function App() {
  return (
    <Desktop>
      <Global />
      <TopBar>
        <TopLeft>
          <Fitted w={68}>Activities</Fitted>
          <AppMenu><ChromeIcon s={15} /><Fitted w={110}>Google Chrome</Fitted><Caret6 /></AppMenu>
        </TopLeft>
        <Clock><Fitted w={58}>Fri 11:52</Fitted></Clock>
        <TopRight>
          <StatusSlot $w={28}><S s={15}><path d="M1 6Q8 -1 15 6" stroke="#8d8a83" strokeWidth="2" /><path d="M3.5 8.5Q8 4 12.5 8.5M5.5 11Q8 8.7 10.5 11" stroke="#dfdbd2" strokeWidth="1.800" /><circle cx="8" cy="13.500" r="1.800" fill="#dfdbd2" /></S></StatusSlot>
          <StatusSlot $w={28}><S s={16}><path d="M1 5.5H3.5L7 2V14L3.5 10.5H1Z" fill="#dfdbd2" /><path d="M9 5.5Q10.8 8 9 10.5M11 3.8Q13.8 8 11 12.2" stroke="#dfdbd2" strokeWidth="1.600" /><path d="M13 2Q17 8 13 14" stroke="#8d8a83" strokeWidth="1.500" /></S></StatusSlot>
          <StatusSlot $w={30}><S s={16}><path d="M6 1H10V3H13V15H3V3H6Z" stroke="#dfdbd2" strokeWidth="1.700" /><path d="M5.5 7.5H10.5M5.5 10H10.5M5.5 12.5H10.5" stroke="#dfdbd2" strokeWidth="1.500" /></S></StatusSlot>
          <StatusSlot $w={16}><Caret6 /></StatusSlot>
        </TopRight>
      </TopBar>

      <TabStrip>
        {TABS.map(([Icon, t, w], i) => (
          <TabBox key={i} $active={i === 10}>
            <Icon />
            <TabTitle><Fitted w={w}>{t}</Fitted></TabTitle>
            <TabClose><CloseIcon /></TabClose>
            <TabSep $hide={i === 9 || i === 10 || i === 12} />
          </TabBox>
        ))}
        <StripTail>
          <NewTab><S s={14} v="0 0 14 14"><path d="M7 1V13M1 7H13" stroke="#fff" strokeWidth="2" /></S></NewTab>
          <WindowButtons>
            <S s={14} v="0 0 14 14"><path d="M2 12H12" stroke="#fff" strokeWidth="2" /></S>
            <S s={14} v="0 0 14 14"><path d="M5.5 2.5H11.5V8.5H5.5Z" stroke="#fff" strokeWidth="1.600" /><path d="M2.8 5V11.2H9" stroke="#fff" strokeWidth="1.600" /></S>
            <CloseIcon c="#fff" s={15} w={2} />
          </WindowButtons>
        </StripTail>
      </TabStrip>

      <Toolbar>
        <NavButtons>
          <S><path d="M15.5 8H2.5M8.5 1.5L2 8L8.5 14.5" stroke="#e4f1f7" strokeWidth="2" /></S>
          <S><path d="M.5 8H13.5M7.5 1.5L14 8L7.5 14.5" stroke="#5c6467" strokeWidth="2" /></S>
          <S><path d="M13.3 10.5A6 6 0 1 1 12.5 4L13.3 5" stroke="#e4f1f7" strokeWidth="2" /><path d="M14.800 1V7H8.8Z" fill="#e4f1f7" /></S>
        </NavButtons>
        <UrlBar>
          <S s={9} h={13} v="0 0 9 13"><rect y="4.500" width="9" height="8" rx="1" fill="#5f6368" /><path d="M2 5V3.2Q2 1 4.500 1Q7 1 7 3.2V5" stroke="#5f6368" strokeWidth="1.300" /></S>
          <UrlText>
            <Fitted w={47} color="#666c70">https://</Fitted>
            <Fitted w={114} color="#202124">www.coursera.org</Fitted>
            <Fitted w={341}>/learn/cloud-computing/quiz/YRJDz/prerequisite-quiz</Fitted>
          </UrlText>
          <S s={15}><path d="M8 1.5L9.9 6H14.6L10.9 9L12.2 14L8 11.1L3.8 14L5.1 9L1.4 6H6.1Z" stroke="#5f6368" strokeWidth="1.400" /></S>
        </UrlBar>
        <Extensions>
          <S><path d="M1 0H10L15 5V16H4L1 13Z" fill="#12c4ea" /><path d="M0 0H10L8 3H3V12H1Z" fill="#12679c" /><path d="M4 9H11M8.500 6L11.5 9L8.5 12" stroke="#fff" strokeWidth="2" /></S>
          <S><path d="M8.500 3Q6.500 0 9.500 0Q12 0 11 3L14 4L13 7Q16 7 15.500 9.500Q15 11 12.500 10L13.500 15L10 15.500Q10 12.500 8 13.500L8.500 16H5L5.500 12.500L1.500 15.500L0 14L3 10.500Q.5 10.500 1 8.500Q2 7 4.500 8.500L4.500 5.500L8 6.500Z" fill="#2878c8" /></S>
          <S><circle cx="8" cy="8" r="8" fill="#e80c0c" /><path d="M5 5V8M7 3.5V8M9 3.5V8M11 5V9" stroke="#fff" strokeWidth="1.500" strokeLinecap="round" /><path d="M4.3 7.5H11.7V10Q11 13 8 13Q5.5 13 4.3 10Z" fill="#fff" /></S>
          <S><rect x="1" y="1" width="14" height="14" rx="1.500" fill="#d51313" /><path d="M3 13L10 6" stroke="#40110c" strokeWidth="1.800" /><path d="M11 2L11.8 4.3L14 5L11.8 5.8L11 8L10.2 5.8L8 5L10.2 4.3Z" fill="#ffe25a" /></S>
          <S><rect width="16" height="16" fill="#a9c6dc" /><path d="M0 0H16V5H0Z" fill="#c9dbe8" /><path d="M0 7Q8 5 13 7L14 11H0Z" fill="#2878bd" /><path d="M2 8.500H12" stroke="#dceaf4" strokeDasharray="2 1" /><path d="M0 12H16V16H0Z" fill="#b1aca3" /></S>
        </Extensions>
        <Profile>
          <S s={20} v="0 0 20 20"><circle cx="10" cy="10" r="10" fill="#d6d7d5" /><path d="M5 12Q3.500 4 9 3Q15 3 15 10L16 14Q14 18 11 19Q7 17 5 12Z" fill="#2b2b2c" /><path d="M5 8.500H12.500V11.500H5.500Z" fill="#b98f6b" /><path d="M6 10H8M10 10H12" stroke="#222" /></S>
          <S s={4} h={16} v="0 0 4 16"><path d="M.5 1H3.5V4H.5ZM.5 6.5H3.5V9.5H.5ZM.5 12H3.5V15H.5Z" fill="#e4f1f7" /></S>
        </Profile>
      </Toolbar>

      <Bookmarks>
        {MARKS.map(([Icon, t, w, slot], i) => (
          <Bookmark key={i} $w={slot}><Icon /><Fitted w={w}>{t}</Fitted></Bookmark>
        ))}
        <More>»</More>
        <Bookmark $w={146}><FolderIcon /><Fitted w={120}>Other bookmarks</Fitted></Bookmark>
      </Bookmarks>

      <Viewport>
        <Page>
          <PageHeader>
            <BackArrow><S s={20} v="0 0 20 20"><path d="M19 10H1.5M10 1.2L1.5 10L10 18.8" stroke="#1f1f1f" strokeWidth="2.200" strokeLinecap="round" strokeLinejoin="round" /></S></BackArrow>
            <TitleBlock>
              <Title><Fitted w={171.5}>Prerequisite Quiz</Fitted></Title>
              <Subtitle>Practice Quiz, 25 questions</Subtitle>
            </TitleBlock>
            <Score>19/25 points (76%)</Score>
          </PageHeader>
          <Questions>
            <Question>
              <Status><Mark /><Points>0 / 1<br />point</Points></Status>
              <Number>21.</Number>
              <Content>
                <Prompt>{PROMPT.map((l) => <div key={l}>{l}</div>)}</Prompt>
                <CodeBox lines={[""]} height={36} after={20} />
                <Choice $after={22}><Radio /><span>O(1)</span></Choice>
                <Choice $after={17}><Radio $ring="#ff3067" /><span>Confusing</span></Choice>
                <Feedback $color="#ff3067">This should not be selected</Feedback>
                <Choice $after={22}><Radio /><span>O(N)</span></Choice>
                <Choice $after={0}><Radio /><span>O(N<sup>3</sup>)</span></Choice>
              </Content>
            </Question>
            <Divider />
            <Question>
              <Status><Mark ok /><Points>1 / 1<br />point</Points></Status>
              <Number>22.</Number>
              <Content>
                <Prompt>Someone writes the following piece of code. What is its Big O complexity?</Prompt>
                <CodeBox lines={CODE} height={84} after={60} />
                <Choice $after={22}><Radio /><span>O(1)</span></Choice>
                <Choice $after={17}><Radio $ring="#08c177" /><span>O(N<sup>2</sup>)</span></Choice>
                <Feedback $color="#08c177">Correct</Feedback>
              </Content>
            </Question>
          </Questions>
        </Page>
        <Scrollbar><Arrow /><Thumb /><Arrow $down /></Scrollbar>
      </Viewport>

      <Dock>
        {DOCK.map((Icon, i) => <DockItem key={i}><Icon /></DockItem>)}
        <DockItem $active><ChromeIcon s={39} /><RunningDot /></DockItem>
        <AppsGrid>{Array.from({ length: 9 }, (_, i) => <i key={i} />)}</AppsGrid>
      </Dock>
    </Desktop>
  );
}
